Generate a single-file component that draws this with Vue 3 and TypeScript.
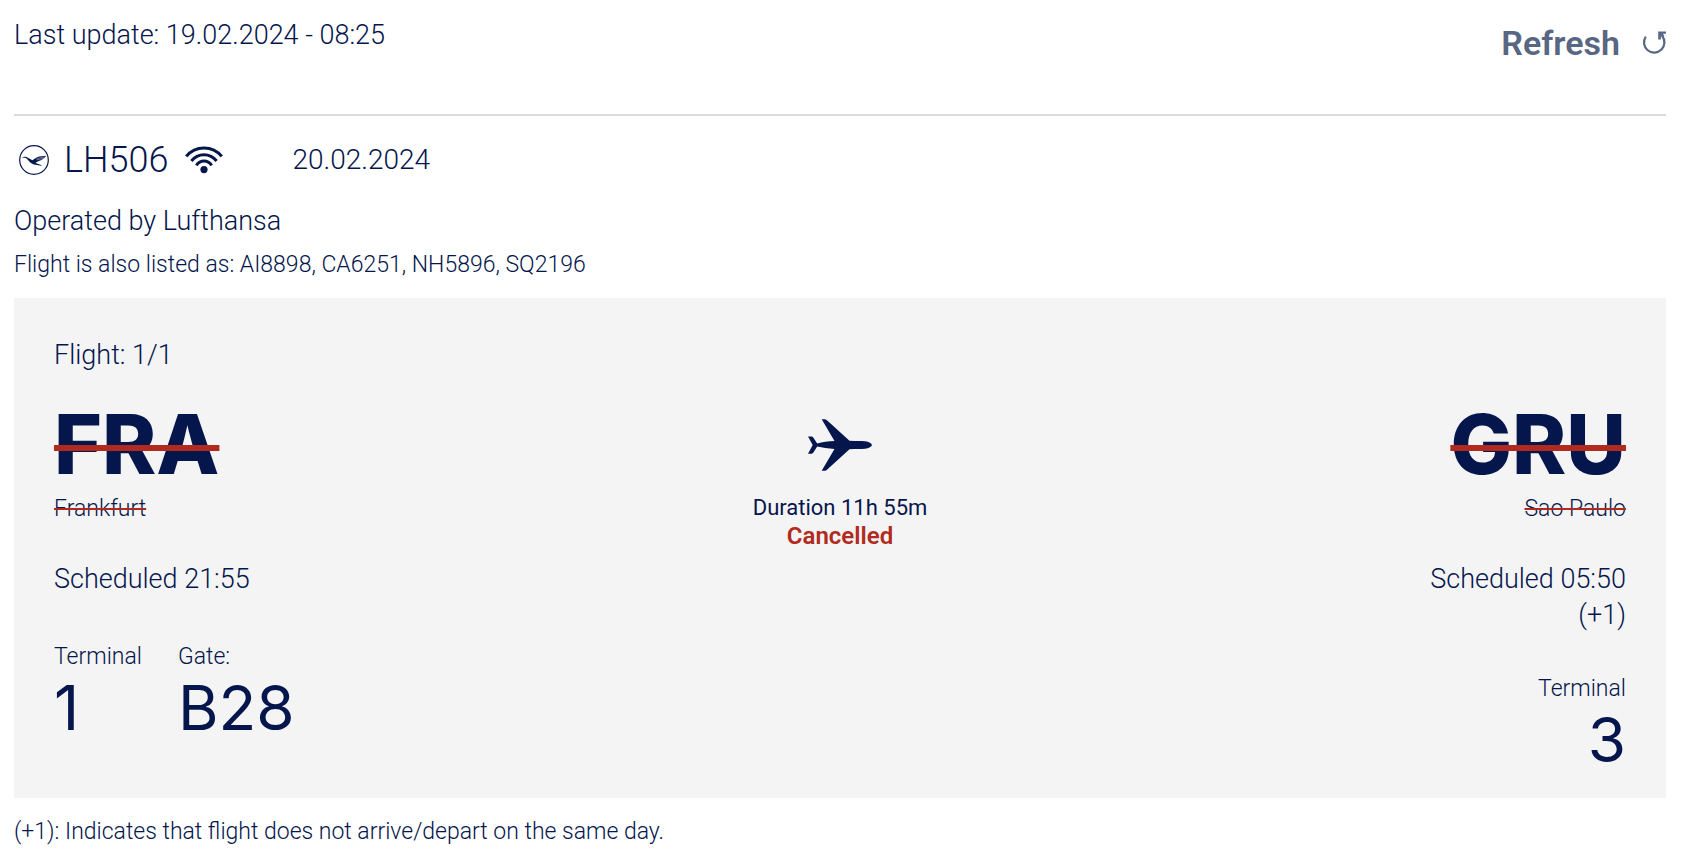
<script setup lang="ts">
interface Stop {
  code: string
  city: string
  time: string
  dayOffset?: string
  facts: { label: string; value: string }[]
}

const codeshares: string[] = ['AI8898', 'CA6251', 'NH5896', 'SQ2196']

const departure: Stop = {
  code: 'FRA',
  city: 'Frankfurt',
  time: '21:55',
  facts: [
    { label: 'Terminal', value: '1' },
    { label: 'Gate:', value: 'B28' },
  ],
}

const arrival: Stop = {
  code: 'GRU',
  city: 'Sao Paulo',
  time: '05:50',
  dayOffset: '(+1)',
  facts: [{ label: 'Terminal', value: '3' }],
}
</script>

<template>
  <main class="page">
    <header class="top">
      <p class="text">Last update: 19.02.2024 - 08:25</p>
      <button type="button" class="refresh">
        <span>Refresh</span>
        <svg class="refresh-icon" viewBox="0 0 24 24" aria-hidden="true">
          <path d="M3.8 5.6A10.2 10.2 0 1 0 20 4.8" fill="none" stroke="currentColor" stroke-width="2.2" />
          <path d="M16.2.6H24V2.8H20.8L22.4 4.8L20.4 6.4L18.9 4.6V8.6H16.2Z" fill="currentColor" />
        </svg>
      </button>
    </header>

    <section class="flight">
      <div class="title">
        <svg class="crane" viewBox="0 0 30 30" aria-hidden="true">
          <circle cx="15" cy="15" r="14.3" fill="none" stroke="currentColor" stroke-width="1.2" />
          <path d="M2.4 12.4L5.6 11.8C6.8 11.4 7.8 12 8.8 12.8L13.4 15.3C15.6 14.5 17 12.2 20.2 11.6L27.4 10.8L25.8 12.3L26 12.5L24.4 13.5L24.5 13.8L22.6 14.7L22.7 15L20.4 15.7C18.9 16.3 17.7 16.9 16.5 18.1L22.8 20.2L22.4 20.8L14.8 19.4C11.9 18.5 10.3 16.9 8.6 14.6C7.6 13.2 6.7 12.7 5.5 12.7Z" fill="currentColor" />
          <path d="M17.5 13.6L26 11.9M17.5 14.9L24.6 13.4" stroke="#fff" stroke-width=".4" />
        </svg>
        <h1 class="number">LH506</h1>
        <svg class="wifi" viewBox="0 0 38 28" aria-hidden="true">
          <g fill="none" stroke="currentColor" stroke-width="3">
            <path d="M1.2 10.4C10.5-.9 27.5-.9 36.8 10.4" />
            <path d="M6.4 15C13 6.7 25 6.7 31.6 15" />
            <path d="M11.3 19.3C15.3 13.7 22.7 13.7 26.7 19.3" />
          </g>
          <circle cx="19" cy="23.6" r="3.6" fill="currentColor" />
        </svg>
        <time class="date" datetime="2024-02-20">20.02.2024</time>
      </div>
      <p class="text operator">Operated by Lufthansa</p>
      <p class="note">Flight is also listed as: {{ codeshares.join(', ') }}</p>
    </section>

    <section class="panel">
      <p class="text">Flight: 1/1</p>
      <div class="route">
        <div class="stop">
          <h2 class="code"><s>{{ departure.code }}</s></h2>
          <p class="city"><s>{{ departure.city }}</s></p>
          <p class="text schedule">Scheduled {{ departure.time }}</p>
          <dl class="facts">
            <div v-for="fact in departure.facts" :key="fact.label">
              <dt>{{ fact.label }}</dt>
              <dd>{{ fact.value }}</dd>
            </div>
          </dl>
        </div>

        <div class="status">
          <svg class="plane" viewBox="0 0 64 52" aria-hidden="true">
            <path d="M13.7.2H16C17.6.2 18.5.8 19.5 1.8L41.5 21.8C48 22.2 53 21.9 57 22.3C61 22.8 63.8 24.3 63.8 26S61 29.2 57 29.7C53 30.1 48 29.8 41.5 30.2L19.5 50.2C18.5 51.2 17.6 51.8 16 51.8H13.7L26.5 29.9C20 29.6 14.5 28.7 9.2 27.6L5.4 33.5C4.7 34.5 4 34.8 3 34.8H0L4.7 26L0 17.6H3C4 17.6 4.7 17.9 5.4 18.7L9.2 24.4C14.5 23.3 20 22.4 26.5 22.1Z" fill="currentColor" />
          </svg>
          <p class="duration">Duration 11h 55m</p>
          <strong>Cancelled</strong>
        </div>

        <div class="stop end">
          <h2 class="code"><s>{{ arrival.code }}</s></h2>
          <p class="city"><s>{{ arrival.city }}</s></p>
          <p class="text schedule">Scheduled {{ arrival.time }}<br />{{ arrival.dayOffset }}</p>
          <dl class="facts">
            <div v-for="fact in arrival.facts" :key="fact.label">
              <dt>{{ fact.label }}</dt>
              <dd>{{ fact.value }}</dd>
            </div>
          </dl>
        </div>
      </div>
    </section>

    <p class="note footnote">(+1): Indicates that flight does not arrive/depart on the same day.</p>
  </main>
</template>

<style>
body {
  margin: 0;
  background: #fff;
}
</style>

<style scoped>
.page {
  padding: 17px 16px 5px 14px;
  color: #05164d;
  font-family: Roboto, "Liberation Sans", sans-serif;
  font-weight: 300;
}

p,
h1,
h2,
dl,
dd {
  margin: 0;
}

.text {
  font-size: 27px;
  line-height: 36px;
}

.note {
  font-size: 23px;
  line-height: 32px;
}

.top {
  display: flex;
  justify-content: space-between;
  align-items: flex-start;
  padding-bottom: 45px;
  border-bottom: 2px solid #d9dadc;
}

.refresh {
  display: flex;
  align-items: center;
  gap: 22px;
  padding: 0;
  border: 0;
  background: none;
  color: #576682;
  font-family: inherit;
  font-size: 34px;
  font-weight: 600;
  line-height: 52px;
  cursor: pointer;
}

.refresh-icon {
  width: 24px;
  height: 24px;
}

.flight {
  padding: 20px 0 17px;
}

.title {
  display: flex;
  align-items: center;
  height: 48px;
}

.crane {
  width: 30px;
  height: 30px;
  margin: 0 15px 0 5px;
}

.number {
  font-size: 36px;
  font-weight: 300;
  line-height: 48px;
}

.wifi {
  width: 38px;
  height: 28px;
  margin: 0 69px 0 17px;
}

.date {
  font-size: 28px;
  line-height: 36px;
}

.operator {
  margin: 19px 0 10px;
}

.panel {
  padding: 39px 40px 26px;
  background: #f4f4f4;
}

.route {
  display: grid;
  grid-template-columns: 1fr auto 1fr;
  margin-top: 32px;
}

.end {
  text-align: right;
}

.code {
  font-family: Inter, "Liberation Sans", sans-serif;
  font-size: 82px;
  font-weight: 800;
  line-height: 80px;
}

.code s {
  text-decoration: line-through 6px #b12a20;
}

.city {
  margin: 10px 0 38px;
  font-size: 23px;
  line-height: 28px;
}

.city s {
  text-decoration: line-through 2px #b12a20;
}

.schedule {
  min-height: 40px;
}

.facts {
  display: flex;
  gap: 36px;
  margin-top: 42px;
}

.end .facts {
  justify-content: flex-end;
}

dt {
  font-size: 23px;
  line-height: 28px;
}

dd {
  margin-top: 5px;
  font-family: Inter, "Liberation Sans", sans-serif;
  font-size: 62px;
  font-weight: 400;
  line-height: 64px;
}

.status {
  padding-top: 14px;
  text-align: center;
  font-size: 24px;
  font-weight: 400;
  line-height: 28px;
}

.plane {
  display: block;
  width: 64px;
  height: 52px;
  margin: 0 auto 23px;
}

.duration {
  font-size: 22px;
}

.status strong {
  color: #b12a20;
  font-weight: 600;
}

.footnote {
  margin-top: 18px;
}
</style>
